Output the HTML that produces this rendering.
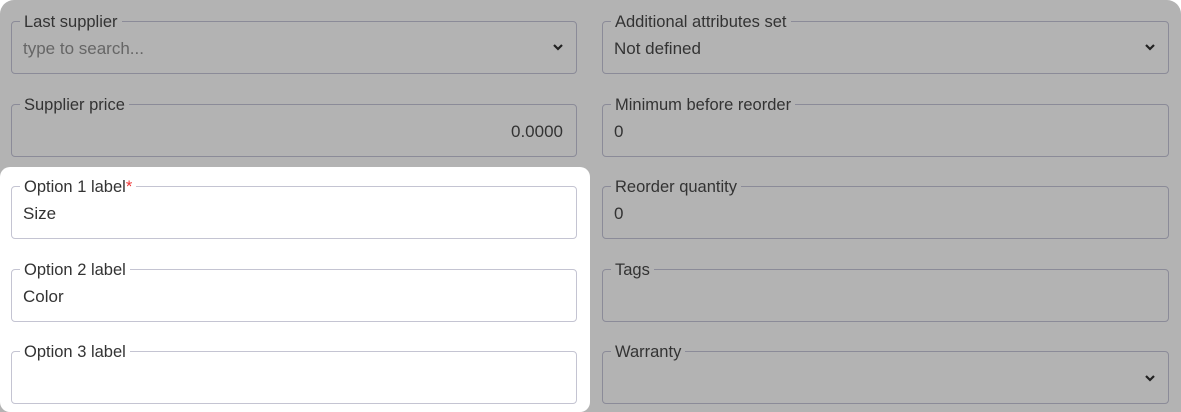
<!DOCTYPE html><html><head><style>
body{margin:0;width:1181px;height:412px;background:#fff;overflow:hidden;font-family:"Liberation Sans",sans-serif;position:relative}
.bg{position:absolute;left:0;top:0;width:1181px;height:412px;background:#b3b3b3;border-radius:14px 14px 0 0}
.hl{position:absolute;left:0;top:167px;width:590px;height:245px;background:#fff;border-radius:10px}
.f{position:absolute;width:566px;height:53px;border:1px solid #8b8b98;border-radius:4px;box-sizing:border-box}
.f.rc{width:567px}
.f.w{border-color:#c4c4d2}
.l{position:absolute;left:8px;top:-10px;padding:0 4px;font-size:16.5px;color:#333;background:#b3b3b3;line-height:20px}
.f.w .l{background:#fff}
.v{position:absolute;left:11px;top:17px;font-size:17px;color:#333}
.r{position:absolute;right:13px;top:17px;font-size:17px;color:#333}
.ph{color:#666}
.s{color:#e33}
svg{position:absolute;right:12px;top:21px}
</style></head><body>
<div class="bg"></div><div class="hl"></div>
<div class="f" style="left:11px;top:21px"><span class="l">Last supplier</span><span class="v ph">type to search...</span><svg width="12" height="8" viewBox="0 0 12 8"><path d="M2 2l4 4 4-4" stroke="#222" stroke-width="2.2" fill="none"/></svg></div>
<div class="f rc" style="left:602px;top:21px"><span class="l">Additional attributes set</span><span class="v">Not defined</span><svg width="12" height="8" viewBox="0 0 12 8"><path d="M2 2l4 4 4-4" stroke="#222" stroke-width="2.2" fill="none"/></svg></div>
<div class="f" style="left:11px;top:104px"><span class="l">Supplier price</span><span class="r">0.0000</span></div>
<div class="f rc" style="left:602px;top:104px"><span class="l">Minimum before reorder</span><span class="v">0</span></div>
<div class="f w" style="left:11px;top:186px"><span class="l">Option 1 label<span class="s">*</span></span><span class="v">Size</span></div>
<div class="f rc" style="left:602px;top:186px"><span class="l">Reorder quantity</span><span class="v">0</span></div>
<div class="f w" style="left:11px;top:269px"><span class="l">Option 2 label</span><span class="v">Color</span></div>
<div class="f rc" style="left:602px;top:269px"><span class="l">Tags</span></div>
<div class="f w" style="left:11px;top:351px"><span class="l">Option 3 label</span></div>
<div class="f rc" style="left:602px;top:351px"><span class="l">Warranty</span><svg width="12" height="8" viewBox="0 0 12 8" style="top:22px"><path d="M2 2l4 4 4-4" stroke="#222" stroke-width="2.2" fill="none"/></svg></div>
</body></html>
